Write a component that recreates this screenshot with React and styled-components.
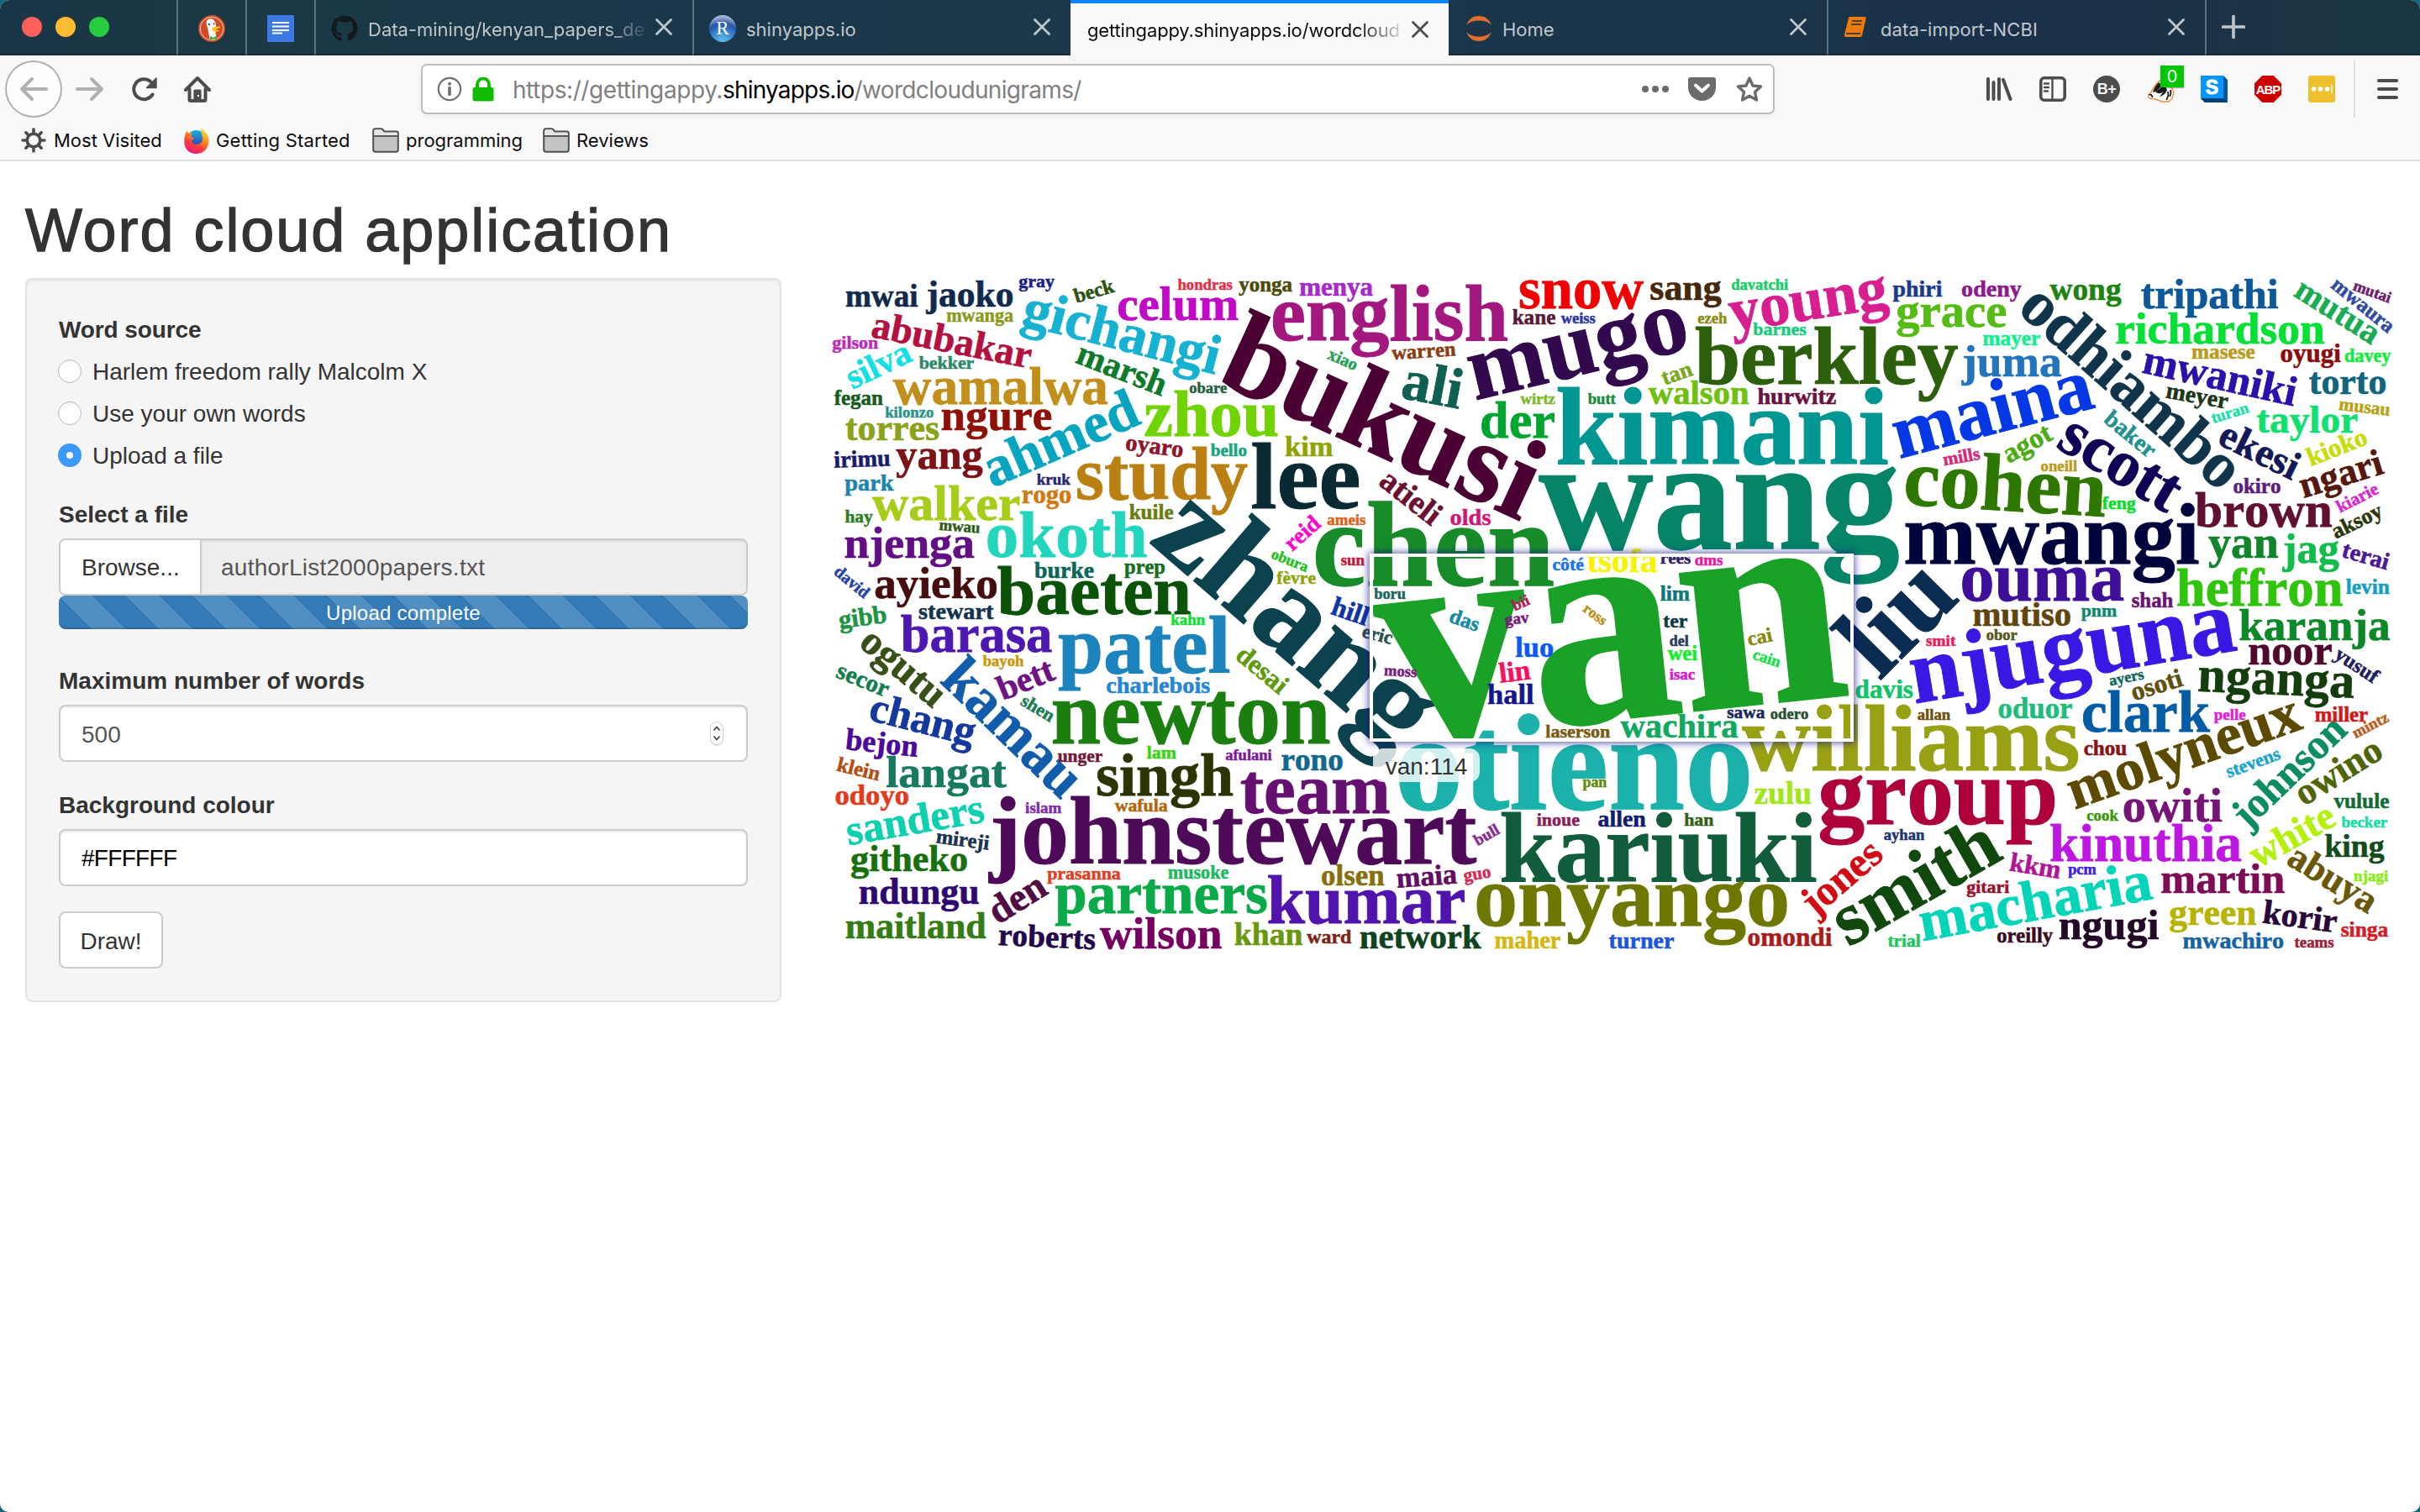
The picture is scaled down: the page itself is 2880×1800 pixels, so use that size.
import React from "react";
import styled, { createGlobalStyle } from "styled-components";
import { FaGithub } from "react-icons/fa";

const uiFont = `Inter, "Open Sans", sans-serif`;
const pageFont = `"Liberation Sans", Arial, sans-serif`;

const GlobalStyle = createGlobalStyle`
  * { box-sizing: border-box; }
  html { background: #14657f; }
  body { margin: 0; font-family: ${pageFont}; color: #333; }
`;

const Window = styled.div`
  width: 2880px;
  height: 1800px;
  border-radius: 12px 12px 10px 10px;
  overflow: hidden;
  background: #fff;
  display: flex;
  flex-direction: column;
`;

/* ---------- tab strip ---------- */

const TabStrip = styled.div`
  flex: none;
  height: 66px;
  display: flex;
  background: linear-gradient(90deg, #1b3646 0%, #1a3946 14%, #1b374b 26%, #1c384b 50%, #1a344a 75%, #1b3049 86%, #1b3445 93%, #1a3643 100%);
`;

const WindowButtons = styled.div`
  width: 210px;
  height: 66px;
  padding-left: 26px;
  display: flex;
  align-items: center;
  gap: 16px;
  border-bottom: 2px solid #182b39;
`;

const Light = styled.span`
  width: 24px;
  height: 24px;
  border-radius: 50%;
  background: ${(p) => p.$color};
`;

const Tab = styled.div`
  width: ${(p) => (p.$pinned ? 82 : 450)}px;
  height: 66px;
  display: flex;
  align-items: center;
  padding: ${(p) => (p.$pinned ? "0 0 0 24px" : p.$active || p.$afterActive ? "0 24px 0 20px" : "0 24px 0 18px")};
  border-left: ${(p) => (p.$active || p.$afterActive ? "0" : "2px solid #5d727e")};
  border-top: ${(p) => (p.$active ? "4px solid #0a84ff" : "0")};
  border-bottom: ${(p) => (p.$active ? "0" : "2px solid #182b39")};
  background: ${(p) => (p.$active ? "#f9f9fa" : "transparent")};
  color: ${(p) => (p.$active ? "#0c0c0d" : "#c0c7cb")};
`;

const TabIcon = styled.span`
  flex: none;
  width: 32px;
  height: 32px;
  margin: 4px 12px 0 0;
  display: flex;
`;

const TabTitle = styled.span`
  flex: 1;
  min-width: 0;
  white-space: nowrap;
  margin-right: 12px;
  font: 400 22px/32px ${uiFont};
  letter-spacing: ${(p) => p.$ls || 0}px;
  padding-top: ${(p) => (p.$active ? 2 : 5)}px;
  ${(p) => p.$fade && "mask-image: linear-gradient(90deg, #000 86%, transparent 102%);"}
`;

const NewTab = styled.div`
  width: 255px;
  height: 66px;
  padding: 18px 0 0 18px;
  border-left: 2px solid #5d727e;
  border-bottom: 2px solid #182b39;
`;

const CloseSvg = styled.svg`
  flex: none;
`;

function Close({ color }) {
  return (
    <CloseSvg width="20" height="20" viewBox="0 0 20 20">
      <path d="M1.5 1.5 18.5 18.5M18.5 1.5 1.5 18.5" stroke={color} strokeWidth="2.8" strokeLinecap="round" />
    </CloseSvg>
  );
}

function DuckIcon() {
  return (
    <svg width="32" height="32" viewBox="0 0 32 32">
      <circle cx="16" cy="16" r="16" fill="#d04a26" />
      <circle cx="16" cy="16" r="13.8" fill="none" stroke="#f3d5c8" strokeWidth="1" />
      <path d="M10 6.500c3-3 7-3 9 0 2 2 2 5 2 8l-.5 5c0 3 1 6 1 8-3 1.500-5 1.500-8 .5L11 15c-1-3-2-5-1-8.500z" fill="#f4f5f6" />
      <circle cx="12.800" cy="11" r="1.200" fill="#34597c" />
      <circle cx="18.600" cy="10.400" r="1" fill="#34597c" />
      <path d="M16.500 15c4-1 7-2 10-1-1 2-4 2.500-6 3 2 1 3 1 5 1-3 3-8 2-9-.5z" fill="#fbc21b" />
      <path d="M14 25l4 1.500 4-2v5l-4-1-4 1.500z" fill="#4fae3d" />
    </svg>
  );
}

function DocIcon() {
  return (
    <svg width="32" height="32" viewBox="0 0 32 32">
      <rect x="0" y="0" width="32" height="32" rx="1" fill="#3d7be2" />
      <path d="M6 9h20M6 13.500h20M6 18h20M6 21.500h12" stroke="#fff" strokeWidth="2.200" />
    </svg>
  );
}

const RBall = styled.span`
  width: 32px;
  height: 32px;
  border-radius: 50%;
  background: radial-gradient(circle at 50% 100%, #62c3f3 0%, #3b86cf 38%, #2357a8 62%, #8fa5cf 80%, #dfe3ee 100%);
  color: #fff;
  font: 400 23px/32px "Liberation Serif", serif;
  text-align: center;
`;

function JupyterIcon() {
  return (
    <svg width="32" height="32" viewBox="0 0 32 32">
      <path d="M1 12C4 4 10 1 16 1s12 3 15 11C27 8 22 6.500 16 6.500S5 8 1 12z" fill="#e46e2e" />
      <path d="M1 20c3 8 9 11 15 11s12-3 15-11c-4 4-9 5.500-15 5.500S5 24 1 20z" fill="#e46e2e" />
    </svg>
  );
}

function BookIcon() {
  return (
    <svg width="28" height="28" viewBox="0 0 28 28">
      <path d="M7 2h18c1.500 0 2 1 1.500 2.500L22 24c-.5 1.500-1 2-2.500 2H3c-2 0-2.500-1.500-2-3L6 3.500C6.200 2.500 6.500 2 7 2z" fill="#ef7c08" />
      <path d="M10 7h12M9 11h12" stroke="#1b3049" strokeWidth="1.600" />
      <path d="M3 22h17" stroke="#1b3049" strokeWidth="1.600" />
    </svg>
  );
}

/* ---------- toolbar ---------- */

const Chrome = styled.div`
  flex: none;
  height: 126px;
  background: #f9f9fa;
  border-bottom: 2px solid #e0e0e1;
  display: flex;
  flex-direction: column;
`;

const Toolbar = styled.div`
  height: 80px;
  display: flex;
  align-items: center;
  padding: 0 26px 0 6px;
`;

const BackButton = styled.span`
  width: 68px;
  height: 68px;
  border: 2px solid #b1b1b1;
  border-radius: 50%;
  background: #fdfdfd;
  display: flex;
  align-items: center;
  justify-content: center;
`;

const Slot = styled.span`
  display: flex;
  flex: none;
  margin-left: ${(p) => p.$gap}px;
`;

const UrlBar = styled.div`
  width: 1614px;
  height: 60px;
  margin-left: 250px;
  border: 2px solid #bebebe;
  border-radius: 7px;
  background: #fff;
  box-shadow: 0 2px 6px rgba(0, 0, 0, 0.06);
  display: flex;
  align-items: center;
  padding: 0 12px 0 17px;
`;

const UrlText = styled.span`
  flex: 1;
  margin-left: 22px;
  padding-top: 2px;
  font: 400 28px/40px ${uiFont};
  letter-spacing: -0.4px;
  color: #808080;
  white-space: nowrap;
`;

const UrlDomain = styled.span`
  letter-spacing: -0.8px;
  color: #000;
`;

const UrlPath = styled.span`
  letter-spacing: -0.65px;
`;

const CounterIcon = styled.span`
  position: relative;
  width: 32px;
  height: 32px;
  display: flex;
`;

const Counter = styled.span`
  position: absolute;
  left: 15px;
  top: -12px;
  width: 28px;
  height: 26px;
  background: #00c800;
  color: #fff;
  font: 400 20px/27px ${uiFont};
  text-align: center;
  box-shadow: 0 1px 1px rgba(0, 0, 0, 0.3);
`;

const PlusBadge = styled.span`
  width: 32px;
  height: 32px;
  border-radius: 50%;
  background: #4c4c4d;
  color: #f5f5f5;
  font: 700 18px/33px "Liberation Sans", sans-serif;
  letter-spacing: -0.5px;
  text-align: center;
`;

const AbpBadge = styled.span`
  width: 32px;
  height: 32px;
  background: #cc0000;
  clip-path: polygon(29% 0, 71% 0, 100% 29%, 100% 71%, 71% 100%, 29% 100%, 0 71%, 0 29%);
  color: #fff;
  display: flex;
  justify-content: center;
  font: 700 15px/33px "Liberation Sans", sans-serif;
  letter-spacing: -1px;
`;

const ToolDivider = styled.span`
  width: 2px;
  height: 68px;
  margin-left: 22px;
  background: #dededf;
`;

const MenuBars = styled.span`
  margin-left: 26px;
  width: 25px;
  display: flex;
  flex-direction: column;
  gap: 6px;
  i { height: 4px; border-radius: 2px; background: #4c4c4d; }
`;

const Bookmarks = styled.div`
  flex: 1;
  display: flex;
  align-items: flex-start;
  padding: 4px 0 0 24px;
`;

const Bookmark = styled.span`
  display: flex;
  align-items: center;
  height: 34px;
  width: ${(p) => p.$w}px;
  gap: 8px;
  font: 400 22px/34px ${uiFont};
  letter-spacing: ${(p) => p.$ls || 0}px;
  color: #0c0c0d;
  white-space: nowrap;
  svg { flex: none; }
`;

function FolderIcon() {
  return (
    <svg width="32" height="30" viewBox="0 0 32 30">
      <path d="M1.200 4c0-1.500 1-2.800 2.500-2.800h7c1 0 1.500.5 2.300 1.500L14 4.500h14.500c1.500 0 2.300 1 2.300 2.300V26c0 1.500-1 2.800-2.500 2.800H3.700c-1.500 0-2.500-1.300-2.500-2.800z" fill="#c4c4c4" stroke="#4f4f50" strokeWidth="2" />
      <path d="M2.200 4.500c0-1.500.8-2.300 2-2.300h6.500l3 3.500h14.500c1 0 1.600.6 1.600 1.500v2H2.200z" fill="#e4e4e4" />
      <path d="M2 10h28" stroke="#4f4f50" strokeWidth="1.800" />
    </svg>
  );
}

function GearIcon() {
  return (
    <svg width="32" height="30" viewBox="-15 -15 30 30">
      <circle r="7.800" fill="none" stroke="#4c4c4d" strokeWidth="3.600" />
      {[0, 45, 90, 135, 180, 225, 270, 315].map((a) => (
        <path key={a} d="M0 -9V-13" stroke="#4c4c4d" strokeWidth="3.600" strokeLinecap="round" transform={`rotate(${a})`} />
      ))}
    </svg>
  );
}

function FirefoxIcon() {
  return (
    <svg width="30" height="31" viewBox="0 0 30 31">
      <defs>
        <linearGradient id="fxFlame" x1="0.8" y1="0" x2="0.3" y2="1">
          <stop offset="0" stopColor="#ffe83a" />
          <stop offset="0.35" stopColor="#ff9a16" />
          <stop offset="0.7" stopColor="#ff3b3f" />
          <stop offset="1" stopColor="#e3188a" />
        </linearGradient>
        <linearGradient id="fxGlobe" x1="0" y1="0" x2="0" y2="1">
          <stop offset="0" stopColor="#0bb6e8" />
          <stop offset="1" stopColor="#3a2f9c" />
        </linearGradient>
      </defs>
      <circle cx="14.500" cy="14" r="11" fill="url(#fxGlobe)" />
      <path d="M1.500 8c.5-2 1.500-4 2.500-5 0 2 .5 2.800 1.500 3.500C7.500 6 9 6 10.500 6.500 8.500 8 8.500 10 9 11l3 1c-1 2-3 2.500-3 4.500 1 3.500 6 4.500 10 2.500 3-2 4-6 2-11-.5-2-1-4-.5-8 1.500 2 3 3.500 5 5.500 3 3.500 4.300 6.500 4 11C29 25 23 31 14.500 31S0 25 .3 16c0-3 .4-5.500 1.200-8z" fill="url(#fxFlame)" />
    </svg>
  );
}

/* ---------- page ---------- */

const Page = styled.main`
  flex: 1;
  padding: 43px 30px 0;
`;

const Title = styled.h1`
  margin: 0;
  padding-bottom: 17px;
  font: 400 72px/79px ${pageFont};
  letter-spacing: 1.95px;
  -webkit-text-stroke: 1.300px #333;
`;

const Columns = styled.div`
  display: flex;
  align-items: flex-start;
  gap: 60px;
`;

const Well = styled.section`
  width: 900px;
  height: 862px;
  flex: none;
  padding: 38px;
  background: #f5f5f5;
  border: 2px solid #e3e3e3;
  border-radius: 8px;
  box-shadow: inset 0 2px 2px rgba(0, 0, 0, 0.05);
  font-size: 28px;
  line-height: 40px;
`;

const Label = styled.div`
  font-weight: 700;
  height: 40px;
  line-height: 43px;
  margin-bottom: ${(p) => p.$mb ?? 10}px;
  letter-spacing: ${(p) => p.$ls || 0}px;
`;

const RadioRow = styled.div`
  height: 40px;
  margin-bottom: ${(p) => (p.$last ? 29 : 10)}px;
  display: flex;
  align-items: center;
  gap: 13px;
`;

const RadioText = styled.span`
  height: 40px;
  line-height: 42px;
`;

const Radio = styled.span`
  width: 28px;
  height: 28px;
  border-radius: 50%;
  margin-left: -1px;
  display: flex;
  align-items: center;
  justify-content: center;
  background: ${(p) => (p.$on ? "#3b99fc" : "linear-gradient(#f4f4f4, #fff 30%)")};
  border: ${(p) => (p.$on ? "0" : "1.500px solid #b9b9b9")};
  &::after {
    content: "";
    width: 8px;
    height: 8px;
    border-radius: 50%;
    background: ${(p) => (p.$on ? "#fff" : "transparent")};
  }
`;

const FileRow = styled.div`
  height: 68px;
  display: flex;
  border: 2px solid #ccc;
  border-radius: 8px;
  overflow: hidden;
  background: #eee;
`;

const Browse = styled.span`
  width: 168px;
  padding: 13px 0 0 25px;
  background: #fff;
  border-right: 2px solid #ccc;
`;

const FileName = styled.span`
  flex: 1;
  padding: 13px 0 0 23px;
  color: #555;
  letter-spacing: 0.25px;
  box-shadow: inset 0 2px 2px rgba(0, 0, 0, 0.075);
`;

const Progress = styled.div`
  height: 40px;
  margin-bottom: 40px;
  border-radius: 8px;
  background-color: #337ab7;
  background-image: linear-gradient(45deg, rgba(255, 255, 255, 0.15) 25%, transparent 25%, transparent 50%, rgba(255, 255, 255, 0.15) 50%, rgba(255, 255, 255, 0.15) 75%, transparent 75%, transparent);
  background-size: 80px 80px;
  box-shadow: inset 0 -2px 0 rgba(0, 0, 0, 0.15);
  color: #fff;
  font-size: 24px;
  line-height: 42px;
  letter-spacing: 0.25px;
  text-align: center;
`;

const Field = styled.div`
  height: 68px;
  margin-bottom: 30px;
  padding: 0 27px 0 25px;
  display: flex;
  align-items: center;
  justify-content: space-between;
  background: #fff;
  border: 2px solid #ccc;
  border-radius: 8px;
  box-shadow: inset 0 2px 2px rgba(0, 0, 0, 0.075);
  color: ${(p) => p.$color};
  line-height: 42px;
  letter-spacing: ${(p) => p.$ls || 0}px;
`;

const FieldValue = styled.span`
  padding-top: ${(p) => p.$drop || 0}px;
`;

const Stepper = styled.span`
  width: 16px;
  height: 28px;
  border: 1px solid #cfcfcf;
  border-radius: 8px;
  display: flex;
  align-items: center;
  justify-content: center;
  box-shadow: 0 1px 1px rgba(0, 0, 0, 0.15);
`;

const DrawButton = styled.button`
  display: block;
  width: 124px;
  height: 68px;
  padding: 3px 0 0;
  background: #fff;
  border: 2px solid #ccc;
  border-radius: 8px;
  color: #333;
  font: 400 28px/40px ${pageFont};
`;

/* ---------- word cloud ---------- */

const Cloud = styled.section`
  position: relative;
  width: 1855px;
  height: 799px;
  flex: none;
`;

const CloudArt = styled.svg`
  display: block;
  overflow: visible;
  text {
    font-family: "Liberation Serif", "Times New Roman", serif;
    font-weight: 700;
    font-kerning: none;
    font-variant-ligatures: none;
  }
`;

const HoverFrame = styled.div`
  position: absolute;
  left: 640px;
  top: 328px;
  width: 576px;
  height: 224px;
  border: 4px solid #fff;
  box-shadow: 0 0 9px 1px rgba(20, 20, 140, 0.75);
`;

const HoverTag = styled.div`
  position: absolute;
  left: 644px;
  top: 560px;
  width: 127px;
  height: 40px;
  border-radius: 12px;
  background: rgba(255, 255, 255, 0.8);
  font-size: 28px;
  line-height: 43px;
  text-align: center;
`;

/* Advance widths of the bold serif face, in thousandths of an em. */
const ADVANCE = {
  a: 500, b: 556, c: 444, d: 556, e: 444, f: 333, g: 500, h: 556, i: 278, j: 333, k: 556, l: 278, m: 833,
  n: 556, o: 500, p: 556, q: 556, r: 444, s: 389, t: 333, u: 556, v: 500, w: 722, x: 500, y: 500, z: 444,
  "é": 444, "è": 444, "ô": 500,
};

/* text, colour, baseline from x, to x, baseline y, y at the far end when tilted */
const WORDS = [
  ["mwai", "#10294f", 1006.5, 1092, 364.7],
  ["jaoko", "#10294f", 1100, 1206, 364.7],
  ["gray", "#1b1f8a", 1212.7, 1254.7, 341.7],
  ["beck", "#2c5410", 1281, 1327, 360.7, 347.3],
  ["celum", "#c00ac8", 1330, 1473.5, 381],
  ["hondras", "#e0324a", 1401.7, 1466.6, 344.7],
  ["yonga", "#4c4a0c", 1474.7, 1537.6, 347.3],
  ["menya", "#a62acb", 1546.6, 1633.5, 351.7],
  ["mwanga", "#8a9a1c", 1126.5, 1205.7, 382.7],
  ["gichangi", "#17b2d2", 1214.7, 1445.4, 386.3, 445.7],
  ["english", "#a3187f", 1513.5, 1793.5, 405],
  ["bukusi", "#4a0032", 1448, 1808, 454.3, 620],
  ["abubakar", "#b3113f", 1036, 1224, 401, 438.3],
  ["gilson", "#b82bb8", 990.6, 1045, 415],
  ["silva", "#16dfe4", 1015, 1087, 463.5, 429],
  ["bekker", "#2b8a6c", 1094, 1159, 439],
  ["marsh", "#0e7a2b", 1279, 1382, 431.5, 471.5],
  ["obare", "#256040", 1415.5, 1460, 468.3],
  ["xiao", "#2aa055", 1579, 1612, 426.5, 441.5],
  ["wamalwa", "#c28f1c", 1063.7, 1318, 481.3],
  ["fegan", "#155c1e", 993, 1050.6, 482.3],
  ["kilonzo", "#2a9488", 1053.5, 1111, 496.7],
  ["torres", "#8ba31b", 1006.5, 1117.5, 524.3],
  ["ngure", "#8f1005", 1120.4, 1251.4, 512.3],
  ["ahmed", "#08a5c0", 1182, 1359, 580.7, 504],
  ["zhou", "#6fd400", 1362.5, 1521, 519.3],
  ["oyaro", "#8e1628", 1339, 1407, 535.5, 544.5],
  ["bello", "#16a57c", 1441, 1483.7, 542.7],
  ["kim", "#90a400", 1529.5, 1586, 542.7],
  ["study", "#bb8014", 1281, 1483.7, 594],
  ["lee", "#0a2a33", 1490, 1618, 604.5],
  ["irimu", "#1a1a70", 993, 1059.6, 556.7, 554.5],
  ["yang", "#7a1217", 1067, 1169, 558.3],
  ["kruk", "#282870", 1234, 1273.5, 576.7],
  ["rogo", "#d07a14", 1216.3, 1275, 598.5],
  ["park", "#1d86ad", 1005.7, 1063, 584],
  ["walker", "#a7cd1b", 1039, 1213.5, 619],
  ["hay", "#2f7d24", 1005.7, 1038.4, 621.7],
  ["mwau", "#2f5a18", 1117.6, 1165.7, 630.7, 634.7],
  ["kuile", "#6b7c10", 1344, 1396.3, 618],
  ["okoth", "#22d6bd", 1174, 1364.5, 663],
  ["njenga", "#620f86", 1005.3, 1159, 664.3],
  ["reid", "#f808c8", 1538, 1573, 656.7, 626],
  ["ameis", "#d8621c", 1579.6, 1625, 624.7],
  ["chen", "#178b28", 1563.7, 1848, 696.7],
  ["sun", "#c0183c", 1596, 1623.7, 673],
  ["obura", "#22c01c", 1512, 1554, 664, 681],
  ["fèvre", "#90a60c", 1519.6, 1565.7, 695],
  ["prep", "#14701c", 1338.4, 1386.6, 682.7],
  ["burke", "#0c6658", 1231.4, 1301.6, 688],
  ["david", "#2743a8", 991.4, 1028, 682.7, 713],
  ["ayieko", "#450d0d", 1041, 1187, 712.3],
  ["baeten", "#0a5208", 1188, 1416.7, 730.7],
  ["zhang", "#0b424e", 1368, 1660, 646, 898],
  ["hill", "#0d34a8", 1583, 1624.5, 730.7, 745],
  ["snow", "#f00000", 1808, 1955, 366.7],
  ["sang", "#46280a", 1964, 2048, 356.7],
  ["davatchi", "#18cc66", 2060.4, 2128, 344.7],
  ["young", "#d81f8f", 2062, 2248, 394.5, 366],
  ["kane", "#5a1838", 1800, 1851, 386],
  ["weiss", "#253a9c", 1858, 1898.4, 385],
  ["mugo", "#32094c", 1757, 2013, 476, 414.5],
  ["ezeh", "#8c8c18", 2020.4, 2055, 385],
  ["barnes", "#18cc7c", 2086.5, 2149.4, 399],
  ["warren", "#8a3e14", 1657, 1732.6, 428.3, 423.3],
  ["ali", "#0f5f52", 1666.5, 1735.5, 473.5, 486.7],
  ["berkley", "#2c5f0c", 2018.4, 2329, 457],
  ["tan", "#7aa81e", 1981, 2015.5, 458.5, 446.5],
  ["wirtz", "#7cb828", 1809.8, 1850.6, 481],
  ["butt", "#1a8a3c", 1890, 1922.5, 481],
  ["walson", "#70c010", 1962.4, 2081, 481],
  ["hurwitz", "#6a1240", 2091.8, 2185, 481],
  ["der", "#00a530", 1762, 1850, 520.7],
  ["kimani", "#009692", 1853, 2246, 552.3],
  ["atieli", "#6a1030", 1639.6, 1703, 576.7, 626.7],
  ["olds", "#d01878", 1726, 1774, 624.7],
  ["wang", "#058468", 1834, 2258, 652.7],
  ["côté", "#1a72f0", 1847.8, 1884.5, 678.7],
  ["tsofa", "#f8f400", 1889, 1972, 681],
  ["rees", "#302068", 1976, 2012, 670.7],
  ["dms", "#e818a0", 2017, 2050, 673.3],
  ["boru", "#20645c", 1635.5, 1672.7, 712.7],
  ["otieno", "#1ab2aa", 1662, 2084.5, 962.7],
  ["williams", "#98a014", 2075, 2474, 916.7],
  ["van", "#1aa127", 1657, 2199, 884, 827],
  ["lim", "#117878", 1976, 2010.6, 714.7],
  ["bii", "#b02058", 1803, 1821.6, 727.5, 719],
  ["gav", "#7a1a78", 1791.8, 1819.6, 744, 741],
  ["das", "#178aa4", 1723.7, 1757, 740, 752],
  ["ross", "#b89018", 1883, 1907, 727, 745],
  ["ter", "#0c3a44", 1979.6, 2008, 746.7],
  ["cai", "#8a8a10", 2081.6, 2110, 769, 763],
  ["del", "#28385c", 1987, 2009.4, 768.7],
  ["wei", "#10ee2c", 1985, 2019.6, 786],
  ["cain", "#18e048", 2085, 2116.5, 784, 794.5],
  ["isac", "#d818d0", 1987, 2017, 808.7],
  ["luo", "#0a58f8", 1803.7, 1848.6, 782.3],
  ["lin", "#f81060", 1785.7, 1822, 812.7, 808.3],
  ["hall", "#12188c", 1770.6, 1825, 838.3],
  ["eric", "#28504c", 1620, 1655, 758, 767],
  ["moss", "#78207c", 1647, 1685.7, 804, 806],
  ["laserson", "#7a5a10", 1839.6, 1916, 878.3],
  ["wachira", "#12a860", 1929, 2068, 878.3],
  ["sawa", "#1a2c5c", 2055.5, 2100, 855],
  ["odero", "#285030", 2107, 2152, 856],
  ["pan", "#648a0c", 1883.7, 1912, 936.7],
  ["team", "#651070", 1477, 1653.5, 968.3],
  ["zulu", "#a2e61c", 2088, 2155.5, 956.7],
  ["group", "#ae003a", 2165, 2447.5, 980.7],
  ["inoue", "#8a2058", 1829, 1879.6, 983.3],
  ["allen", "#101c70", 1902, 1958.4, 984.3],
  ["han", "#306014", 2004.5, 2039, 982.7],
  ["kariuki", "#115c3a", 1786, 2161, 1048.7],
  ["bull", "#882c90", 1758.4, 1785.7, 1007, 991.5],
  ["johnstewart", "#4e0a58", 1171, 1755.5, 1028.3],
  ["olsen", "#86700c", 1572.6, 1647, 1054],
  ["maia", "#620c64", 1663, 1734, 1056.7, 1051.7],
  ["guo", "#d02c58", 1743, 1775, 1049.5, 1044],
  ["kumar", "#5014ac", 1508.6, 1743, 1098.7],
  ["onyango", "#6e7800", 1755.5, 2128.6, 1102.3],
  ["network", "#0f4420", 1618.4, 1762, 1128.7],
  ["ward", "#7c2414", 1555.5, 1608, 1122.7],
  ["maher", "#d4b810", 1779, 1857, 1128.7],
  ["turner", "#1c54dc", 1915, 1992, 1128.7],
  ["omondi", "#a81c1c", 2080, 2180, 1126],
  ["jones", "#d20c14", 2158, 2243, 1094, 1021],
  ["smith", "#10480e", 2201, 2385, 1127, 1022],
  ["trial", "#1cc85c", 2246.7, 2285.5, 1126.7],
  ["phiri", "#1a3a8c", 2253, 2311, 353],
  ["odeny", "#8c1a8c", 2334.5, 2405.5, 353],
  ["wong", "#1e8410", 2440, 2524, 356.7],
  ["grace", "#54bc14", 2257, 2387.5, 389],
  ["tripathi", "#0c5898", 2548.4, 2711, 366.7],
  ["richardson", "#04e034", 2517.8, 2766, 408.7],
  ["mayer", "#10f090", 2359.8, 2428, 410.7],
  ["juma", "#2474bc", 2332, 2453, 448.3],
  ["odhiambo", "#10344a", 2400, 2642, 370.4, 585.6],
  ["mutua", "#1aac54", 2728.8, 2822, 351.7, 410.7],
  ["mwaura", "#304aa4", 2773, 2841.5, 341.7, 397],
  ["mutai", "#6c1c6c", 2799.4, 2843, 345, 360.7],
  ["masese", "#b89c1c", 2608.4, 2683.5, 426.7],
  ["oyugi", "#8a0c0c", 2714, 2785.5, 430.7],
  ["davey", "#10ec3c", 2790.4, 2845, 430.7],
  ["mwaniki", "#2c10ac", 2548.4, 2728.8, 443.3, 483.3],
  ["torto", "#10647e", 2748.4, 2839.8, 468.7],
  ["maina", "#0438e4", 2261.5, 2494, 545.7, 485],
  ["meyer", "#1a3818", 2577, 2649.6, 473.3, 486.7],
  ["turan", "#1ce0a8", 2634, 2677, 504, 490.7],
  ["taylor", "#10e070", 2686, 2805.5, 514.7],
  ["musau", "#b8a414", 2783, 2843.5, 487.7, 495],
  ["scott", "#100254", 2446, 2577.6, 532, 611],
  ["baker", "#209090", 2502.7, 2556.5, 501.7, 546],
  ["agot", "#4cac14", 2391, 2444, 551.7, 522.7],
  ["mills", "#d42878", 2313.7, 2357, 554.3, 546.7],
  ["oneill", "#b89c20", 2428.8, 2472, 561],
  ["cohen", "#2f7800", 2265.5, 2504, 600.5, 615],
  ["feng", "#08dc28", 2502, 2541.4, 606],
  ["ekesi", "#141858", 2638, 2727, 528, 571.7],
  ["kioko", "#c8dc08", 2750.4, 2819, 555, 528.3],
  ["okiro", "#5c1c7c", 2657.8, 2714, 586.7],
  ["ngari", "#54180c", 2742, 2838, 592.7, 563.3],
  ["brown", "#601030", 2613, 2775, 626.7],
  ["kiarie", "#d42cc8", 2785, 2832, 610.7, 586.7],
  ["aksoy", "#2c380c", 2780, 2837, 641.7, 614],
  ["mwangi", "#00043c", 2266.7, 2616, 671],
  ["yan", "#12842c", 2628.8, 2711, 664.3],
  ["jag", "#12bc4c", 2714, 2783, 670],
  ["terai", "#4c1898", 2786, 2840, 662.7, 678.3],
  ["liu", "#0a2c50", 2238, 2333, 810, 714],
  ["ouma", "#3e109a", 2333.7, 2527, 714.7],
  ["shah", "#6a1470", 2537, 2586, 722.7],
  ["heffron", "#30c40c", 2590.8, 2787.6, 720.7],
  ["levin", "#14a0c4", 2792, 2843.5, 706.7],
  ["mutiso", "#60440c", 2348, 2464.7, 745],
  ["pnm", "#108870", 2477, 2519, 734.3],
  ["gibb", "#1c9444", 999.6, 1056, 748, 741],
  ["stewart", "#14344c", 1093.5, 1182, 736.7],
  ["barasa", "#4c18b0", 1072.7, 1251.4, 776.3],
  ["kahn", "#10e030", 1393.5, 1434, 744.3],
  ["patel", "#1c84bc", 1260.4, 1463, 800.7],
  ["ogutu", "#385018", 1021, 1110, 768.5, 844],
  ["bayoh", "#c8980c", 1170, 1218, 793],
  ["secor", "#147c4c", 994, 1053.5, 806, 830],
  ["kamau", "#125cac", 1118, 1263, 812, 952.7],
  ["bett", "#6e1286", 1194, 1257, 834, 808.3],
  ["charlebois", "#2486d4", 1316.7, 1440, 824.7],
  ["desai", "#609a10", 1469, 1522, 783.3, 827.3],
  ["shen", "#1a7c54", 1213.5, 1249.4, 838.3, 860],
  ["newton", "#1b7f0f", 1252, 1582, 884.7],
  ["chang", "#14389c", 1033, 1156, 857, 888],
  ["bejon", "#4c0898", 1005.7, 1091, 891.7, 901],
  ["klein", "#b05014", 995, 1045, 917.3, 929.3],
  ["langat", "#167a5e", 1055, 1197, 936.7],
  ["unger", "#741838", 1259, 1312, 906.7],
  ["lam", "#3cd410", 1365, 1399.6, 902.7],
  ["afulani", "#7a1c98", 1458.4, 1513.5, 904.7],
  ["rono", "#10688c", 1525, 1598.4, 916.7],
  ["singh", "#2c3404", 1305, 1467, 946.7],
  ["odoyo", "#e03c1c", 994, 1081.6, 958.3],
  ["sanders", "#0cd0ae", 1010.6, 1172.7, 1006, 978.3],
  ["islam", "#802ca4", 1220.4, 1263, 968.3],
  ["wafula", "#b0680c", 1327, 1389.4, 966.3],
  ["mireji", "#1c3450", 1113.5, 1176, 1003.3, 1011.7],
  ["githeko", "#17700c", 1012.7, 1151.4, 1036.7],
  ["prasanna", "#e04020", 1246.5, 1333.5, 1046.7],
  ["musoke", "#20b860", 1390, 1462, 1046.3],
  ["ndungu", "#2e0870", 1022.4, 1165, 1076],
  ["den", "#500c44", 1188, 1248.6, 1101, 1063.3],
  ["partners", "#0aaa48", 1256.3, 1507.8, 1087.3],
  ["maitland", "#347c14", 1006.5, 1173, 1116.7],
  ["roberts", "#24084c", 1188, 1303, 1125, 1130],
  ["wilson", "#760060", 1309.8, 1453.5, 1128.7],
  ["khan", "#6a980c", 1469.4, 1549.8, 1125],
  ["smit", "#e81c58", 2292.4, 2327, 768.7],
  ["obor", "#54581c", 2364, 2400.6, 761.7],
  ["njuguna", "#3a18e4", 2279.8, 2662.7, 837.3, 774],
  ["karanja", "#0c8828", 2665, 2844, 761.7],
  ["noor", "#50082c", 2676, 2775, 790.7],
  ["yusuf", "#20205c", 2777, 2824, 783, 814],
  ["nganga", "#143c0c", 2615.7, 2800.6, 822.7, 830.7],
  ["davis", "#12c468", 2208, 2276.5, 830.7],
  ["ayers", "#14685c", 2511.6, 2552, 816.5, 808],
  ["osoti", "#605010", 2540, 2599, 834.3, 816],
  ["allan", "#6c500c", 2282, 2321, 856.7],
  ["oduor", "#20bc7c", 2378, 2466, 855],
  ["clark", "#045ca4", 2478, 2629, 871],
  ["pelle", "#e020dc", 2635, 2672.4, 857],
  ["molyneux", "#5c4a00", 2470, 2741.4, 963.3, 867.3],
  ["miller", "#d01818", 2755, 2817.8, 858.7],
  ["mintz", "#bc5c1c", 2803.5, 2844, 879, 858.3],
  ["chou", "#881414", 2480, 2531, 899],
  ["stevens", "#1ca4d0", 2652.4, 2715, 926, 903.3],
  ["johnson", "#0c8c60", 2673, 2795, 990, 872],
  ["owino", "#506408", 2742.4, 2838, 960, 901],
  ["owiti", "#741474", 2526.7, 2644, 977.7],
  ["cook", "#3c980c", 2483.5, 2520.6, 976.7],
  ["vulule", "#106c34", 2777.8, 2843, 962.3],
  ["becker", "#18dca4", 2786.7, 2841, 985],
  ["kinuthia", "#bc18e0", 2440, 2667, 1024.7],
  ["white", "#b4f008", 2688, 2782, 1034, 981],
  ["king", "#144c20", 2767, 2837, 1020.3],
  ["ayhan", "#1c3470", 2242, 2290, 1000],
  ["kkm", "#b01498", 2391, 2450.4, 1036, 1046],
  ["pcm", "#3c20e4", 2461.4, 2494.5, 1041.3],
  ["abuya", "#685808", 2720, 2818, 1028, 1088],
  ["njagi", "#88ec10", 2801.4, 2842, 1048.7],
  ["gitari", "#94142c", 2340.6, 2391, 1062.7],
  ["macharia", "#04d4b8", 2289, 2562.7, 1120, 1070],
  ["martin", "#7c0c54", 2572, 2718.6, 1062.7],
  ["oreilly", "#380c20", 2376.5, 2442.7, 1122.3],
  ["ngugi", "#240828", 2450.4, 2568.8, 1118.3],
  ["green", "#b8b404", 2582, 2685, 1100.7],
  ["korir", "#280838", 2692, 2779, 1098.3, 1110],
  ["singa", "#d41c28", 2786, 2842, 1115],
  ["mwachiro", "#1464a4", 2598, 2717.8, 1128.7],
  ["teams", "#9c2038", 2730.8, 2777.3, 1128.3],
];

function Word({ data }) {
  const [text, color, x1, x2, y1, y2 = y1] = data;
  const em = [...text].reduce((sum, ch) => sum + ADVANCE[ch], 0) / 1000;
  const lead = text[0] === "j" ? -0.057 : 0.015;
  const size = Math.hypot(x2 - x1, y2 - y1) / (em - lead - 0.015);
  const angle = (Math.atan2(y2 - y1, x2 - x1) * 180) / Math.PI;
  return (
    <text
      fill={color}
      stroke={color}
      strokeWidth={0.4 + size * 0.006}
      fontSize={size}
      x={-lead * size}
      y={0}
      transform={`translate(${x1} ${y1}) rotate(${angle})`}
    >
      {text}
    </text>
  );
}

const INK = "#4c4c4d";

export default function App() {
  return (
    <Window>
      <GlobalStyle />
      <TabStrip>
        <WindowButtons>
          <Light $color="#fc605b" />
          <Light $color="#fdbc2f" />
          <Light $color="#28cc41" />
        </WindowButtons>
        <Tab $pinned><TabIcon><DuckIcon /></TabIcon></Tab>
        <Tab $pinned><TabIcon><DocIcon /></TabIcon></Tab>
        <Tab>
          <TabIcon><FaGithub size={32} color="#14191d" /></TabIcon>
          <TabTitle $fade>Data-mining/kenyan_papers_det</TabTitle>
          <Close color="#c0c7cb" />
        </Tab>
        <Tab>
          <TabIcon><RBall>R</RBall></TabIcon>
          <TabTitle>shinyapps.io</TabTitle>
          <Close color="#c0c7cb" />
        </Tab>
        <Tab $active>
          <TabTitle $active $fade $ls={-0.15}>gettingappy.shinyapps.io/wordcloud</TabTitle>
          <Close color={INK} />
        </Tab>
        <Tab $afterActive>
          <TabIcon><JupyterIcon /></TabIcon>
          <TabTitle>Home</TabTitle>
          <Close color="#c0c7cb" />
        </Tab>
        <Tab>
          <TabIcon><BookIcon /></TabIcon>
          <TabTitle $ls={0.1}>data-import-NCBI</TabTitle>
          <Close color="#c0c7cb" />
        </Tab>
        <NewTab>
          <svg width="28" height="28" viewBox="0 0 28 28">
            <path d="M14 1.500V26.500M1.500 14H26.500" stroke="#c0c7cb" strokeWidth="3.600" strokeLinecap="round" />
          </svg>
        </NewTab>
      </TabStrip>

      <Chrome>
        <Toolbar>
          <BackButton>
            <svg width="34" height="30" viewBox="0 0 34 30" fill="none" stroke="#b1b1b1" strokeWidth="4" strokeLinecap="round" strokeLinejoin="round">
              <path d="M32 15H3M15 3 3 15l12 12" />
            </svg>
          </BackButton>
          <Slot $gap={16}>
            <svg width="34" height="30" viewBox="0 0 34 30" fill="none" stroke="#b1b1b1" strokeWidth="4" strokeLinecap="round" strokeLinejoin="round">
              <path d="M2 15h29M19 3l12 12-12 12" />
            </svg>
          </Slot>
          <Slot $gap={32}>
            <svg width="32" height="30" viewBox="0 0 32 30" fill="none" stroke={INK} strokeWidth="4" strokeLinecap="round">
              <path d="M25.500 21.500A12 12 0 1 1 23 6" />
              <path d="M30 2v11.500H18.500z" fill={INK} stroke={INK} strokeWidth="1.500" strokeLinejoin="round" />
            </svg>
          </Slot>
          <Slot $gap={31}>
            <svg width="32" height="32" viewBox="0 0 32 32" fill="none" stroke={INK} strokeWidth="4" strokeLinecap="round" strokeLinejoin="round">
              <path d="M2 17 16 3l14 14M6.500 16v12.500a1.500 1.500 0 0 0 1.500 1.500h16a1.500 1.500 0 0 0 1.500-1.500V16" />
              <path d="M13 29v-11h6v11" strokeWidth="3.200" fill={INK} />
              <circle cx="17" cy="24" r="1.200" fill="#fff" stroke="none" />
            </svg>
          </Slot>
          <UrlBar>
            <svg width="30" height="30" viewBox="0 0 30 30">
              <circle cx="15" cy="15" r="13.200" fill="none" stroke="#707070" strokeWidth="2.200" />
              <circle cx="15" cy="8.800" r="2" fill="#707070" />
              <path d="M15 13.500v8" stroke="#707070" strokeWidth="3.600" strokeLinecap="round" />
            </svg>
            <Slot $gap={12}>
              <svg width="26" height="29" viewBox="0 0 26 29">
                <path d="M6 14V8.500a7 7 0 0 1 14 0V14" fill="none" stroke="#12bc00" strokeWidth="4" />
                <rect x="0.500" y="12" width="25" height="16.500" rx="2.500" fill="#12bc00" />
              </svg>
            </Slot>
            <UrlText>https://gettingappy.<UrlDomain>shinyapps.io</UrlDomain><UrlPath>/wordcloudunigrams/</UrlPath></UrlText>
            <svg width="34" height="10" viewBox="0 0 34 10" fill="#6b6b6c">
              <circle cx="5" cy="5" r="4" /><circle cx="17" cy="5" r="4" /><circle cx="29" cy="5" r="4" />
            </svg>
            <Slot $gap={22}>
              <svg width="33" height="30" viewBox="0 0 33 30">
                <path d="M3 1h27a3 3 0 0 1 3 3v9a16.500 16 0 0 1-33 0V4a3 3 0 0 1 3-3z" fill="#6b6b6c" />
                <path d="m9 10.500 7.500 7 7.500-7" fill="none" stroke="#fff" strokeWidth="4" strokeLinecap="round" strokeLinejoin="round" />
              </svg>
            </Slot>
            <Slot $gap={24}>
              <svg width="32" height="32" viewBox="0 0 32 32">
                <path d="m16 3 4 9 9.500 1-7 6.500 2 9.500L16 24.200 7.500 29l2-9.500-7-6.500L12 12z" fill="none" stroke="#6b6b6c" strokeWidth="3.400" strokeLinejoin="round" />
              </svg>
            </Slot>
          </UrlBar>
          <Slot $gap={251}>
            <svg width="32" height="30" viewBox="0 0 32 30" stroke={INK} strokeWidth="4" strokeLinecap="round">
              <path d="M3 3v24M9.500 7v20M16 3v24M21 4l8.500 23" />
            </svg>
          </Slot>
          <Slot $gap={32}>
            <svg width="32" height="30" viewBox="0 0 32 30">
              <rect x="1.800" y="1.800" width="28.400" height="26.400" rx="4" fill="none" stroke={INK} strokeWidth="3.600" />
              <path d="M15.500 2v26" stroke={INK} strokeWidth="2.400" />
              <path d="M6 8.500h5M6 13h5M6 17.500h4" stroke={INK} strokeWidth="2.400" strokeLinecap="round" />
            </svg>
          </Slot>
          <Slot $gap={32}><PlusBadge>B+</PlusBadge></Slot>
          <Slot $gap={33}>
            <CounterIcon>
              <svg width="32" height="32" viewBox="0 0 32 32">
                <path d="M14 6c-5 5-8 9-10 14-3 2-4 4-3 6 2 2 5 2 8 2l8 3 8 0 4-4 2-7-6-12z" fill="#fff" stroke="#f08a38" strokeWidth="1.400" />
                <path d="M13 8l4 3c-2 4-6 8-11 9 1-5 4-9 7-12z" fill="#1b1b1b" />
                <path d="M9 19c4-2 8-5 10-10l4 8c-2 5-5 7-9 8l5-6c-4 3-7 3-10 0z" fill="#1b1b1b" />
                <path d="M1.500 23c2-1 4 0 4 3M24 19c1 4 0 7-2 10M27 17c1 3 0 6-1 8" stroke="#1b1b1b" strokeWidth="1.800" fill="none" />
              </svg>
              <Counter>0</Counter>
            </CounterIcon>
          </Slot>
          <Slot $gap={31}>
            <svg width="32" height="32" viewBox="0 0 32 32">
              <path d="M0 0H27L32 5V32H5L0 27z" fill="#005a9e" />
              <path d="M0 27h27l5 5H5z" fill="#003f75" />
              <rect width="27" height="27" fill="#0796ff" />
              <text x="13.500" y="22" textAnchor="middle" fontFamily="Liberation Sans, sans-serif" fontWeight="700" fontSize="23" fill="#fff" stroke="#fff" strokeWidth="1">S</text>
            </svg>
          </Slot>
          <Slot $gap={32}><AbpBadge>ABP</AbpBadge></Slot>
          <Slot $gap={32}>
            <svg width="32" height="32" viewBox="0 0 32 32">
              <rect width="32" height="32" rx="3" fill="#eec02f" />
              <circle cx="6.500" cy="16" r="2.800" fill="#fff" /><circle cx="14.500" cy="16" r="2.800" fill="#fff" /><circle cx="22.500" cy="16" r="2.800" fill="#fff" />
              <path d="M28 10.500v11" stroke="#fff" strokeWidth="1.400" />
            </svg>
          </Slot>
          <ToolDivider />
          <MenuBars><i /><i /><i /></MenuBars>
        </Toolbar>
        <Bookmarks>
          <Bookmark $w={195}><GearIcon />Most Visited</Bookmark>
          <Bookmark $w={224} $ls={0.2}><FirefoxIcon />Getting Started</Bookmark>
          <Bookmark $w={203}><FolderIcon />programming</Bookmark>
          <Bookmark $w={130}><FolderIcon />Reviews</Bookmark>
        </Bookmarks>
      </Chrome>

      <Page>
        <Title>Word cloud application</Title>
        <Columns>
          <Well>
            <Label $mb={11} $ls={-0.1}>Word source</Label>
            <RadioRow><Radio /><RadioText>Harlem freedom rally Malcolm X</RadioText></RadioRow>
            <RadioRow><Radio /><RadioText>Use your own words</RadioText></RadioRow>
            <RadioRow $last><Radio $on /><RadioText>Upload a file</RadioText></RadioRow>
            <Label>Select a file</Label>
            <FileRow>
              <Browse>Browse...</Browse>
              <FileName>authorList2000papers.txt</FileName>
            </FileRow>
            <Progress>Upload complete</Progress>
            <Label>Maximum number of words</Label>
            <Field $color="#555">
              <FieldValue $drop={3}>500</FieldValue>
              <Stepper>
                <svg width="10" height="20" viewBox="0 0 10 20" fill="none" stroke="#444" strokeWidth="1.800">
                  <path d="M1.500 6.500 5 2.500l3.500 4M1.500 13.500 5 17.500l3.500-4" />
                </svg>
              </Stepper>
            </Field>
            <Label>Background colour</Label>
            <Field $color="#000" $ls={-0.7}>
              <FieldValue $drop={2}>#FFFFFF</FieldValue>
            </Field>
            <DrawButton>Draw!</DrawButton>
          </Well>
          <Cloud>
            <CloudArt width="1855" height="799" viewBox="990 331 1855 799">
              {WORDS.map((w) => <Word key={w[0]} data={w} />)}
            </CloudArt>
            <HoverFrame />
            <HoverTag>van:114</HoverTag>
          </Cloud>
        </Columns>
      </Page>
    </Window>
  );
}
